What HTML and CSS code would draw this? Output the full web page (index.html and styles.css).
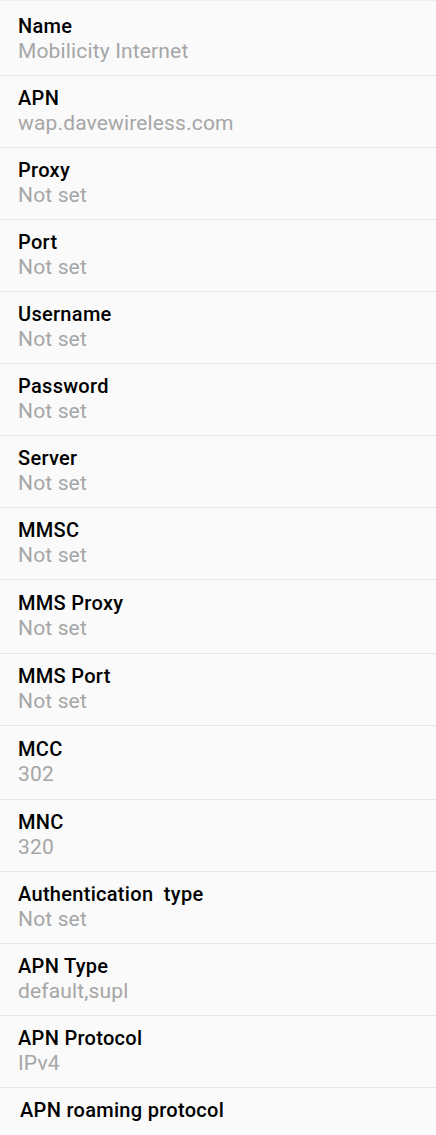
FILE: index.html
```html
<!DOCTYPE html>
<html lang="en">
<head>
    <meta charset="UTF-8">
    <title>APN settings</title>
    <link rel="stylesheet" href="styles.css">
</head>
<body>
    <ul id="apn-list">
        <li class="item first">
            <p class="title">Name</p>
            <p class="value">Mobilicity Internet</p>
        </li>
        <li class="item">
            <p class="title">APN</p>
            <p class="value">wap.davewireless.com</p>
        </li>
        <li class="item">
            <p class="title">Proxy</p>
            <p class="value">Not set</p>
        </li>
        <li class="item">
            <p class="title">Port</p>
            <p class="value">Not set</p>
        </li>
        <li class="item">
            <p class="title">Username</p>
            <p class="value">Not set</p>
        </li>
        <li class="item">
            <p class="title">Password</p>
            <p class="value">Not set</p>
        </li>
        <li class="item">
            <p class="title">Server</p>
            <p class="value">Not set</p>
        </li>
        <li class="item">
            <p class="title">MMSC</p>
            <p class="value">Not set</p>
        </li>
        <li class="item tall">
            <p class="title">MMS Proxy</p>
            <p class="value">Not set</p>
        </li>
        <li class="item">
            <p class="title">MMS Port</p>
            <p class="value">Not set</p>
        </li>
        <li class="item tall">
            <p class="title">MCC</p>
            <p class="value">302</p>
        </li>
        <li class="item">
            <p class="title">MNC</p>
            <p class="value">320</p>
        </li>
        <li class="item">
            <p class="title">Authentication&nbsp; type</p>
            <p class="value">Not set</p>
        </li>
        <li class="item">
            <p class="title">APN Type</p>
            <p class="value">default,supl</p>
        </li>
        <li class="item">
            <p class="title">APN Protocol</p>
            <p class="value">IPv4</p>
        </li>
        <li class="item">
            <p class="title indent">APN roaming protocol</p>
        </li>
    </ul>
</body>
</html>
```
FILE: styles.css
```css
*{
    margin: 0;
    padding: 0;
}
ul{
    list-style: none;
}
body{
    background: #fafafa;
    font-family: Roboto, "Noto Sans", sans-serif;
}
#apn-list{
    border-top: 1px solid #eeeeee;
}
.item{
    height: 72px;
    box-sizing: border-box;/*边框算在高度内*/
    padding: 10px 18px 0;
    border-bottom: 1px solid #e6e6e6;
}
.item.first{
    height: 75px;
    padding-top: 13px;
}
.item.tall{
    height: 74px;
    padding-top: 11px;
}
.title{
    font-size: 20px;
    font-weight: 500;
    letter-spacing: 0.3px;
    line-height: 25px;
    color: #000;
}
.title.indent{
    padding-left: 2px;
}
.value{
    font-size: 21px;
    letter-spacing: 0.15px;
    line-height: 25px;
    color: #a6a6a6;
}
```
